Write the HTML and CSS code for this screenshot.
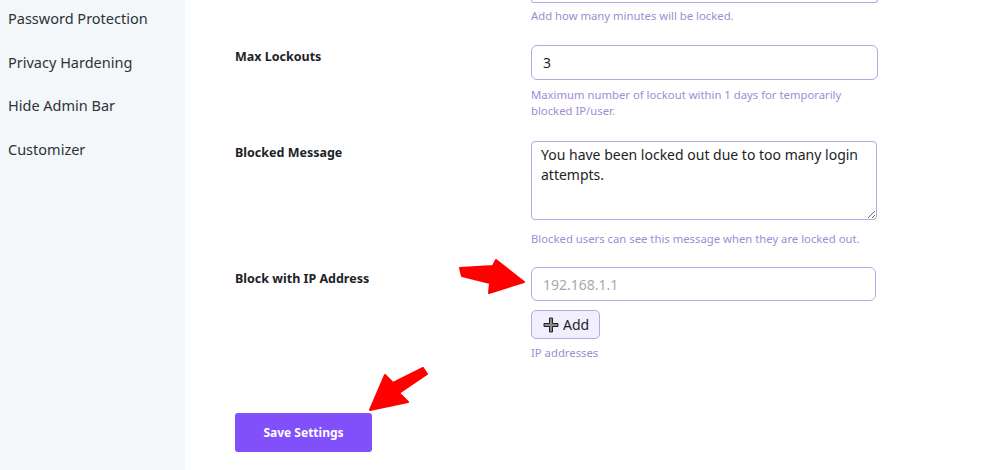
FILE: index.html
```html
<!DOCTYPE html>
<html lang="en">
<head>
<meta charset="utf-8">
<title>Login Security Settings</title>
<link rel="stylesheet" href="styles.css">
</head>
<body>
<div class="page">
  <aside class="sidebar">
    <a class="nav-item">Password Protection</a>
    <a class="nav-item">Privacy Hardening</a>
    <a class="nav-item">Hide Admin Bar</a>
    <a class="nav-item">Customizer</a>
  </aside>
  <main class="main">
    <div class="row row-partial">
      <div class="label"></div>
      <div class="field">
        <div class="input-tail"></div>
        <p class="help">Add how many minutes will be locked.</p>
      </div>
    </div>
    <div class="row row-lockouts">
      <div class="label">Max Lockouts</div>
      <div class="field">
        <input class="input" type="text" value="3">
        <p class="help">Maximum number of lockout within 1 days for temporarily blocked IP/user.</p>
      </div>
    </div>
    <div class="row row-message">
      <div class="label">Blocked Message</div>
      <div class="field">
        <textarea class="textarea">You have been locked out due to too many login attempts.</textarea>
        <p class="help">Blocked users can see this message when they are locked out.</p>
      </div>
    </div>
    <div class="row row-ip">
      <div class="label">Block with IP Address</div>
      <div class="field">
        <input class="input input-ip" type="text" placeholder="192.168.1.1">
        <button class="btn-add" type="button">
          <svg class="plus" viewBox="0 0 16 16" width="16" height="16" aria-hidden="true">
            <path d="M6.5 1h3v5.5h5.5v3h-5.5v5.5h-3v-5.5h-5.5v-3h5.5z" fill="#8a8a8a" stroke="#222" stroke-width="1"/>
          </svg>
          <span>Add</span>
        </button>
        <p class="help">IP addresses</p>
      </div>
    </div>
    <div class="actions">
      <button class="btn-save" type="button">Save Settings</button>
    </div>
  </main>
  <svg class="arrows" width="984" height="470" viewBox="0 0 984 470" aria-hidden="true">
    <polygon points="460,268 493,266 496,260 524,282 489,293 490,283 462,276" fill="#ff0000" stroke="#ff0000" stroke-width="2" stroke-linejoin="round"/>
    <polygon points="370,410 385,375 393,383 423,368 427,374 399,393 408,402" fill="#ff0000" stroke="#ff0000" stroke-width="2" stroke-linejoin="round"/>
  </svg>
</div>
</body>
</html>
```

FILE: styles.css
```css
* { box-sizing: border-box; }
html, body {
  margin: 0;
  padding: 0;
  background: #ffffff;
  font-family: "Noto Sans", "Open Sans", "Liberation Sans", sans-serif;
  color: #1d2327;
}
.page {
  position: relative;
  display: flex;
  width: 984px;
  height: 470px;
  overflow: hidden;
}
.sidebar {
  flex: 0 0 185px;
  background: #f3f7f9;
  display: flex;
  flex-direction: column;
  padding: 8px 0 0 8px;
  gap: 23.5px;
}
.nav-item {
  font-size: 14.5px;
  line-height: 20px;
  color: #2c3338;
  cursor: pointer;
}
.main {
  flex: 1;
  padding-left: 50px;
  display: flex;
  flex-direction: column;
}
.row {
  display: grid;
  grid-template-columns: 296px 347px;
}
.label {
  font-size: 12.5px;
  font-weight: 700;
  color: #1d2327;
  line-height: 18px;
}
.field { display: flex; flex-direction: column; }
.help {
  margin: 0;
  font-size: 11.3px;
  line-height: 16px;
  color: #a28bd4;
}
.input-tail {
  height: 3px;
  border: 1px solid #b9a6ea;
  border-top: none;
  border-radius: 0 0 6px 6px;
}
.row-partial .help { margin-top: 5px; }
.row-lockouts { margin-top: 21px; }
.row-lockouts .label { padding-top: 3px; }
.input {
  width: 347px;
  height: 35px;
  border: 1px solid #b9a6ea;
  border-radius: 6px;
  padding: 0 11px;
  font-family: inherit;
  font-size: 14px;
  color: #1d2327;
  background: #fff;
  outline: none;
}
.row-lockouts .help { margin-top: 7px; }
.row-message { margin-top: 22px; }
.row-message .label { padding-top: 3px; }
.textarea {
  width: 346px;
  height: 79px;
  border: 1px solid #b9a6ea;
  border-radius: 4px;
  padding: 3px 9px;
  font-family: inherit;
  font-size: 14px;
  line-height: 20px;
  color: #1d2327;
  resize: vertical;
  outline: none;
}
.row-message .help { margin-top: 11px; }
.row-ip { margin-top: 20px; }
.row-ip .label { padding-top: 3px; }
.input-ip {
  width: 345px;
  height: 34px;
}
.input-ip::placeholder { color: #a7aaad; }
.btn-add {
  align-self: flex-start;
  margin-top: 9px;
  height: 29px;
  display: inline-flex;
  align-items: center;
  gap: 4px;
  padding: 0 10px 0 11px;
  background: #f1effd;
  border: 1px solid #b9a6ea;
  border-radius: 5px;
  font-family: inherit;
  font-size: 14px;
  color: #1d2327;
  cursor: pointer;
}
.plus { display: block; }
.row-ip .help { margin-top: 6px; }
.actions { margin-top: 52px; }
.btn-save {
  width: 137px;
  height: 39px;
  background: #8150fb;
  border: none;
  border-radius: 3px;
  color: #ffffff;
  font-family: inherit;
  font-size: 12px;
  font-weight: 700;
  cursor: pointer;
}
.arrows {
  position: absolute;
  left: 0;
  top: 0;
  pointer-events: none;
}
```
